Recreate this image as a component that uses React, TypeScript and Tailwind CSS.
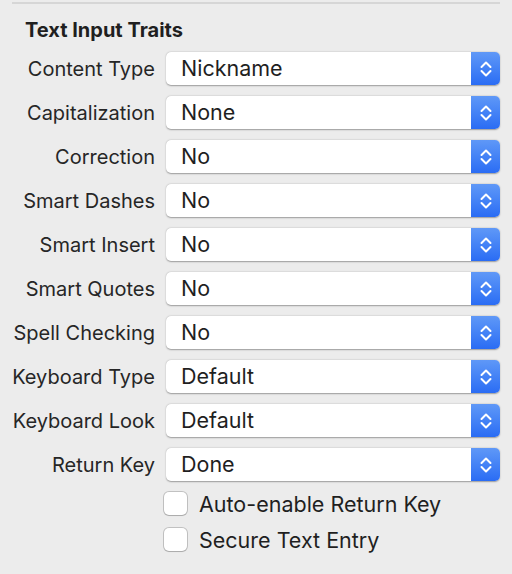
import React from 'react'

const rows: [string, string][] = [
  ['Content Type', 'Nickname'],
  ['Capitalization', 'None'],
  ['Correction', 'No'],
  ['Smart Dashes', 'No'],
  ['Smart Insert', 'No'],
  ['Smart Quotes', 'No'],
  ['Spell Checking', 'No'],
  ['Keyboard Type', 'Default'],
  ['Keyboard Look', 'Default'],
  ['Return Key', 'Done'],
]

const Stepper = () => (
  <div className="flex h-full w-[29px] items-center justify-center rounded-r-[5px] bg-gradient-to-b from-[#5f98f7] to-[#2a6cf4]">
    <svg width="14" height="22" viewBox="0 0 14 22" fill="none" stroke="white" strokeWidth="2" strokeLinecap="round" strokeLinejoin="round">
      <path d="M2.5 9 L7 4.5 L11.5 9" />
      <path d="M2.5 13 L7 17.5 L11.5 13" />
    </svg>
  </div>
)

const PopUp = ({ value }: { value: string }) => (
  <div className="flex h-[33px] w-[334px] items-stretch rounded-[5px] bg-white shadow-[0_0.5px_1.5px_rgba(0,0,0,0.35)]">
    <div className="flex flex-1 items-center pb-[1px] pl-[15px] text-[21.5px] leading-[26px] text-[#1f1f1f]">{value}</div>
    <Stepper />
  </div>
)

const Check = ({ label }: { label: string }) => (
  <div className="flex h-[23px] items-center">
    <div className="h-[23px] w-[23px] rounded-[5px] bg-white shadow-[0_0_0_1px_rgba(0,0,0,0.18),0_1px_1px_rgba(0,0,0,0.12)]" />
    <span className="ml-[12px] text-[21.5px] leading-[26px] text-[#1f1f1f]">{label}</span>
  </div>
)

export default function App() {
  return (
    <div className="h-[574px] w-[512px] overflow-hidden bg-[#ececec] font-['Inter',sans-serif] text-[#1f1f1f]">
      <div className="ml-[12px] mt-[2px] h-[2px] w-[488px] bg-[#d6d6d6]" />
      <div className="ml-[25px] mt-[13px] h-[26px] text-[20px] leading-[26px] font-bold">Text Input Traits</div>
      <div className="mt-[9px] flex flex-col gap-[11px]">
        {rows.map(([label, value]) => (
          <div key={label} className="flex items-center">
            <div className="w-[155px] text-right text-[20px] leading-[24px] text-[#262626]">{label}</div>
            <div className="ml-[11px]">
              <PopUp value={value} />
            </div>
          </div>
        ))}
      </div>
      <div className="ml-[164px] mt-[11px] flex flex-col gap-[13px]">
        <Check label="Auto-enable Return Key" />
        <Check label="Secure Text Entry" />
      </div>
    </div>
  )
}
